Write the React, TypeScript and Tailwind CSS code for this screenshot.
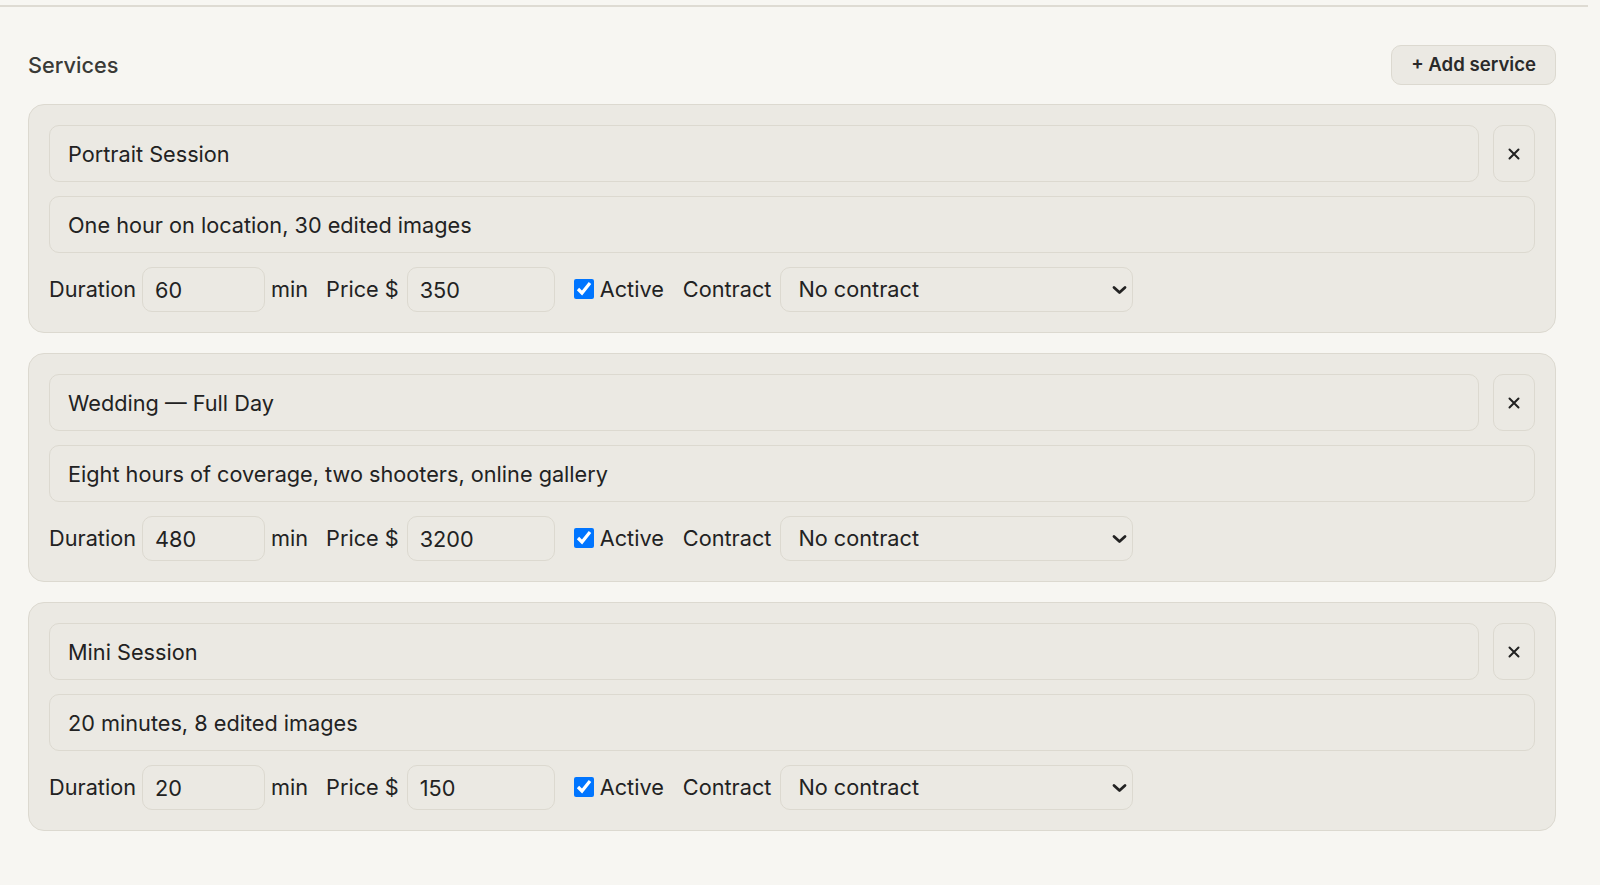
import { useState } from "react";

type Service = {
  id: number;
  name: string;
  description: string;
  duration: number;
  price: number;
  active: boolean;
  contract: string;
};

const initialServices: Service[] = [
  { id: 1, name: "Portrait Session", description: "One hour on location, 30 edited images", duration: 60, price: 350, active: true, contract: "" },
  { id: 2, name: "Wedding — Full Day", description: "Eight hours of coverage, two shooters, online gallery", duration: 480, price: 3200, active: true, contract: "" },
  { id: 3, name: "Mini Session", description: "20 minutes, 8 edited images", duration: 20, price: 150, active: true, contract: "" },
];

const field =
  "bg-[#ebe9e3] border border-[#dcd9d0] rounded-[10px] text-[#222] outline-none";

function ServiceCard({ service, onChange, onRemove }: {
  service: Service;
  onChange: (s: Service) => void;
  onRemove: () => void;
}) {
  return (
    <div className="bg-[#ebe9e3] border border-[#dcd9d0] rounded-[16px] p-5 flex flex-col gap-[14px]">
      <div className="flex gap-[14px]">
        <input
          className={`${field} flex-1 h-[57px] px-[18px] text-[21.7px]`}
          value={service.name}
          onChange={(e) => onChange({ ...service, name: e.target.value })}
        />
        <button
          onClick={onRemove}
          className={`${field} w-[42px] h-[57px] flex items-center justify-center`}
        >
          <svg width="14" height="14" viewBox="0 0 14 14" fill="none" stroke="#222" strokeWidth="2" strokeLinecap="round">
            <path d="M2.5 2.5 L11.5 11.5 M11.5 2.5 L2.5 11.5" />
          </svg>
        </button>
      </div>
      <input
        className={`${field} h-[57px] px-[18px] text-[21.7px]`}
        value={service.description}
        onChange={(e) => onChange({ ...service, description: e.target.value })}
      />
      <div className="flex items-center text-[21.7px] text-[#222] h-[45px]">
        <span className="mr-[6px]">Duration</span>
        <input
          className={`${field} w-[123px] h-[45px] px-3 text-[21.7px]`}
          value={service.duration}
          onChange={(e) => onChange({ ...service, duration: Number(e.target.value) || 0 })}
        />
        <span className="ml-[6px] mr-[18px]">min</span>
        <span className="mr-[8px]">Price $</span>
        <input
          className={`${field} w-[148px] h-[45px] px-3 text-[21.7px]`}
          value={service.price}
          onChange={(e) => onChange({ ...service, price: Number(e.target.value) || 0 })}
        />
        <label className="flex items-center ml-[19px] gap-[6px]">
          <input
            type="checkbox"
            className="w-[20px] h-[20px] m-0"
            checked={service.active}
            onChange={(e) => onChange({ ...service, active: e.target.checked })}
          />
          Active
        </label>
        <span className="ml-[19px] mr-[9px]">Contract</span>
        <div className="relative">
          <select
            className={`${field} appearance-none w-[353px] h-[45px] pl-[17px] pr-10 text-[21.7px]`}
            value={service.contract}
            onChange={(e) => onChange({ ...service, contract: e.target.value })}
          >
            <option value="">No contract</option>
            <option value="standard">Standard agreement</option>
            <option value="wedding">Wedding agreement</option>
          </select>
          <svg
            className="absolute right-[6px] top-1/2 -translate-y-1/2 pointer-events-none"
            width="15" height="10" viewBox="0 0 15 10" fill="none" stroke="#222" strokeWidth="2.8" strokeLinecap="round" strokeLinejoin="round"
          >
            <path d="M2 2.5 L7.5 7.5 L13 2.5" />
          </svg>
        </div>
      </div>
    </div>
  );
}

export default function App() {
  const [services, setServices] = useState<Service[]>(initialServices);

  const addService = () =>
    setServices((s) => [
      ...s,
      { id: Date.now(), name: "", description: "", duration: 60, price: 0, active: true, contract: "" },
    ]);

  return (
    <div className="min-h-screen bg-[#f7f6f2] font-['Inter',sans-serif] text-[#222]">
      <div className="w-[1588px] h-[7px] border-b-2 border-[#dedbd3]" />
      <div className="pl-[28px] pr-[44px] pt-[38px] pb-10">
        <div className="flex items-center justify-between mb-[19px]">
          <h2 className="text-[21.7px] font-medium text-[#3a3a37]">Services</h2>
          <button
            onClick={addService}
            className="h-[40px] px-[19px] rounded-[10px] bg-[#ebe9e3] border border-[#dcd9d0] text-[18.6px] font-semibold text-[#2a2a2a]"
          >
            + Add service
          </button>
        </div>
        <div className="flex flex-col gap-[20px]">
          {services.map((s) => (
            <ServiceCard
              key={s.id}
              service={s}
              onChange={(next) => setServices((all) => all.map((x) => (x.id === next.id ? next : x)))}
              onRemove={() => setServices((all) => all.filter((x) => x.id !== s.id))}
            />
          ))}
        </div>
      </div>
    </div>
  );
}
